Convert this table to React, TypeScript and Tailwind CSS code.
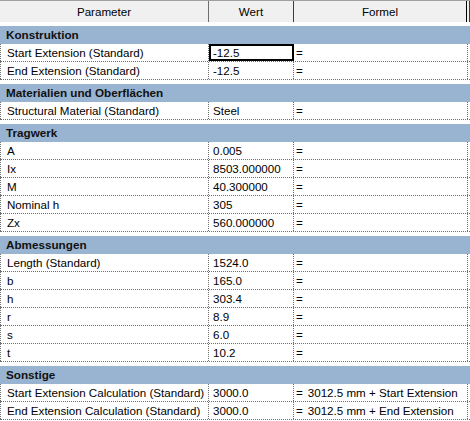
type Row = { name: string; value: string; formula?: string; selected?: boolean };
type Group = { title: string; rows: Row[] };

const groups: Group[] = [
  {
    title: "Konstruktion",
    rows: [
      { name: "Start Extension (Standard)", value: "-12.5", selected: true },
      { name: "End Extension (Standard)", value: "-12.5" },
    ],
  },
  {
    title: "Materialien und Oberflächen",
    rows: [{ name: "Structural Material (Standard)", value: "Steel" }],
  },
  {
    title: "Tragwerk",
    rows: [
      { name: "A", value: "0.005" },
      { name: "Ix", value: "8503.000000" },
      { name: "M", value: "40.300000" },
      { name: "Nominal h", value: "305" },
      { name: "Zx", value: "560.000000" },
    ],
  },
  {
    title: "Abmessungen",
    rows: [
      { name: "Length (Standard)", value: "1524.0" },
      { name: "b", value: "165.0" },
      { name: "h", value: "303.4" },
      { name: "r", value: "8.9" },
      { name: "s", value: "6.0" },
      { name: "t", value: "10.2" },
    ],
  },
  {
    title: "Sonstige",
    rows: [
      { name: "Start Extension Calculation (Standard)", value: "3000.0", formula: "3012.5 mm + Start Extension" },
      { name: "End Extension Calculation (Standard)", value: "3000.0", formula: "3012.5 mm + End Extension" },
    ],
  },
];

const ParamRow = ({ row }: { row: Row }) => (
  <div className="flex h-[18px] border-b border-dotted border-[#6e6e6e]">
    <div className="flex w-[209px] items-center border-r border-l border-dotted border-[#6e6e6e] pl-[6px] whitespace-nowrap">
      {row.name}
    </div>
    <div
      className={
        row.selected
          ? "flex w-[85px] items-center border-r border-dotted border-[#6e6e6e] pl-[4px] outline-2 outline-solid outline-black -outline-offset-2"
          : "flex w-[85px] items-center border-r border-dotted border-[#6e6e6e] pl-[4px]"
      }
    >
      {row.value}
    </div>
    <div className="flex w-[174px] items-center border-r border-dotted border-[#6e6e6e] pl-[2px] whitespace-nowrap">
      <span>=</span>
      {row.formula && <span className="ml-[5px]">{row.formula}</span>}
    </div>
  </div>
);

export default function App() {
  return (
    <div className="h-[421px] w-[470px] overflow-hidden bg-white font-['Liberation_Sans',Arial,sans-serif] text-[11.6px] leading-none text-black">
      <div className="flex h-[22px] border-t border-[#a0a0a0] bg-[#f0f0f0]">
        <div className="flex w-[209px] items-center justify-center border-r border-[#6e6e6e]">Parameter</div>
        <div className="flex w-[85px] items-center justify-center border-r border-[#3c3c3c]">Wert</div>
        <div className="flex w-[173px] items-center justify-center border-r border-black">Formel</div>
        <div className="w-[3px] border-r border-[#3c3c3c]" />
      </div>
      {groups.map((g) => (
        <div key={g.title} className="pt-[4px]">
          <div className="flex h-[18px] items-center bg-[#99b4d1] pl-[6px] text-[11.7px] font-bold text-[#111]">
            {g.title}
          </div>
          {g.rows.map((r) => (
            <ParamRow key={r.name} row={r} />
          ))}
        </div>
      ))}
    </div>
  );
}
